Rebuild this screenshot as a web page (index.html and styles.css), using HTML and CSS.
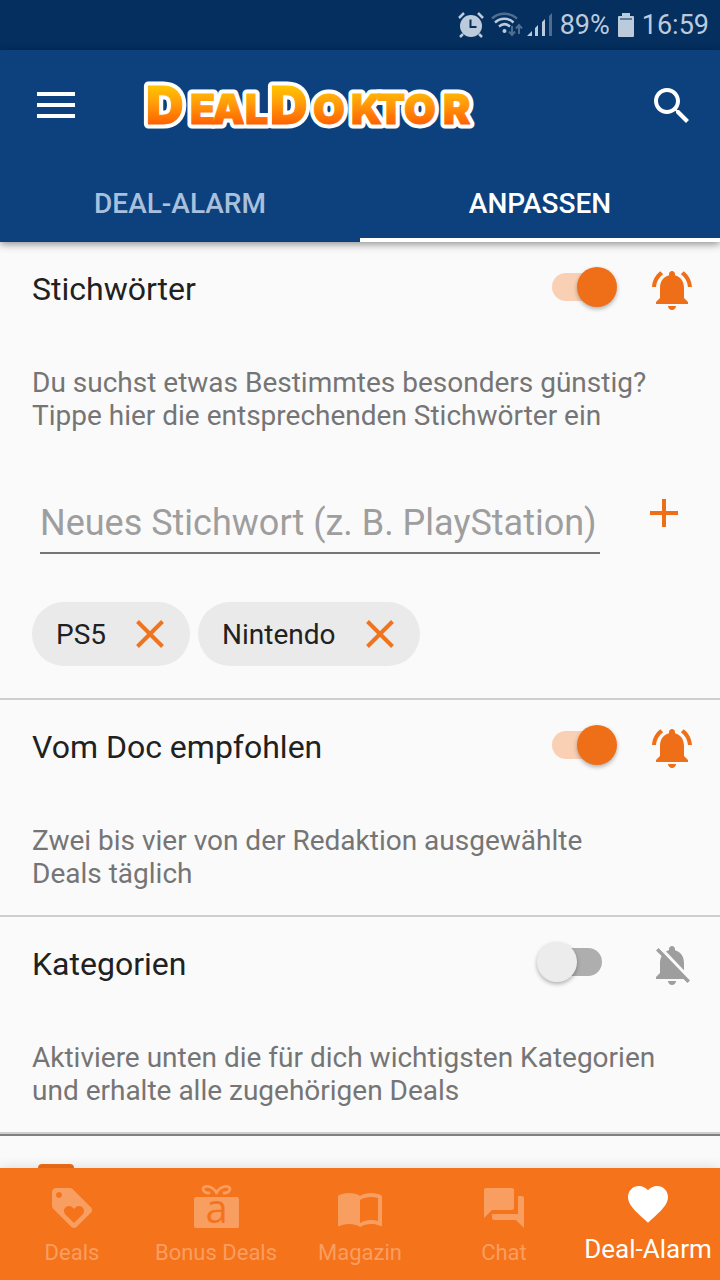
FILE: index.html
```html
<!DOCTYPE html>
<html lang="de">
<head>
<meta charset="utf-8">
<meta name="viewport" content="width=device-width, initial-scale=1">
<title>DealDoktor</title>
<link rel="stylesheet" href="styles.css">
</head>
<body>
<div class="app">
  <div class="status">
    <svg width="26" height="26" viewBox="0 0 26 26" fill="currentColor" aria-hidden="true">
      <circle cx="13" cy="14" r="11"/>
      <path d="M1 6l5-5M25 6l-5-5M5 22l-3 3M21 22l3 3" stroke="currentColor" stroke-width="2.5" fill="none"/>
      <path class="status-cut" d="M12.500 7.500v7.500h6"/>
    </svg>
    <span class="status-radio">
      <svg width="32" height="26" viewBox="0 0 32 26" fill="none" stroke="currentColor" stroke-width="2.500" aria-hidden="true">
        <path d="M1 6.500C8 .2 19 .2 26 6.500" opacity=".4"/>
        <path d="M4 10.500c5.500-5 13-5 18.500 0M8 14.500c3.500-3 7.500-3 11 0"/>
        <circle cx="13.500" cy="19" r="2" fill="currentColor" stroke="none"/>
        <path d="M21 14v9m-3-3.500l3 3.500 3-3.500M28 22v-9m-3 3.500l3-3.500 3 3.500" opacity=".4" stroke-width="2"/>
      </svg>
      <svg width="26" height="26" viewBox="0 0 26 26" fill="currentColor" aria-hidden="true">
        <path d="M0 24l5-5v5zM8 16l3-3v11H8zM15 10l3-3v17h-3z"/>
        <path d="M22 4l3-3v23h-3z" opacity=".4"/>
      </svg>
    </span>
    <span>89%</span>
    <svg width="18" height="26" viewBox="0 0 18 26" fill="currentColor" aria-hidden="true">
      <path d="M5 1h8v3h3q1 0 1 1v19q0 1-1 1H2q-1 0-1-1V5q0-1 1-1h3z"/>
      <path class="status-hair" d="M3 7h12"/>
    </svg>
    <span>16:59</span>
  </div>

  <header class="header">
    <div class="toolbar">
      <button class="icon-button" type="button" aria-label="Menü">
        <svg class="icon" viewBox="0 0 24 24"><path d="M2.500 5h19v2h-19zM2.500 10.500h19v2h-19zM2.500 16h19v2h-19z"/></svg>
      </button>
      <svg class="logo" width="350" height="80" viewBox="0 0 350 80" role="img" aria-label="DealDoktor">
        <defs>
          <linearGradient id="gold" gradientUnits="userSpaceOnUse" x1="0" y1="20" x2="0" y2="58">
            <stop offset="0" stop-color="#ffc400"/>
            <stop offset=".45" stop-color="#ff9d0a"/>
            <stop offset="1" stop-color="#ff6200"/>
          </linearGradient>
        </defs>
        <text class="logo-outline" x="10 54 76 109 134 177 215 241 268 307" y="58"><tspan class="logo-cap">D</tspan>EAL<tspan class="logo-cap">D</tspan>OKTOR</text>
        <text class="logo-fill" x="10 54 76 109 134 177 215 241 268 307" y="58"><tspan class="logo-cap">D</tspan>EAL<tspan class="logo-cap">D</tspan>OKTOR</text>
      </svg>
      <button class="icon-button" type="button" aria-label="Suche">
        <svg class="icon" viewBox="0 0 24 24"><path d="M15.500 14h-.79l-.28-.27C15.410 12.590 16 11.110 16 9.500 16 5.910 13.090 3 9.500 3S3 5.910 3 9.500 5.910 16 9.500 16c1.610 0 3.090-.59 4.230-1.570l.27.28v.79l5 4.990L20.490 19l-4.990-5zm-6 0C7.010 14 5 11.990 5 9.500S7.010 5 9.500 5 14 7.010 14 9.500 11.990 14 9.500 14z"/></svg>
      </button>
    </div>
    <div class="tabs" role="tablist">
      <button class="tab" type="button" role="tab" aria-selected="false">DEAL-ALARM</button>
      <button class="tab tab-active" type="button" role="tab" aria-selected="true">ANPASSEN</button>
    </div>
  </header>

  <main class="content">
    <section class="section">
      <div class="section-head">
        <h2 class="section-title" id="t-keywords">Stichwörter</h2>
        <input class="switch" type="checkbox" role="switch" aria-labelledby="t-keywords" checked>
        <button class="icon-button bell" type="button" aria-label="Benachrichtigung">
          <svg class="icon" viewBox="0 0 24 24"><path id="bell-on" d="M7.580 4.080L6.150 2.650C3.750 4.480 2.170 7.300 2.030 10.500h2c.15-2.650 1.510-4.970 3.550-6.420zm12.390 6.420h2c-.15-3.200-1.730-6.020-4.120-7.850l-1.420 1.430c2.020 1.450 3.390 3.770 3.540 6.420zM18 11c0-3.070-1.640-5.640-4.500-6.320V4c0-.83-.67-1.500-1.500-1.500s-1.500.67-1.500 1.500v.68C7.630 5.360 6 7.920 6 11v5l-2 2v1h16v-1l-2-2v-5zm-6 11c.14 0 .27-.01.4-.04.65-.14 1.180-.58 1.440-1.180.1-.24.15-.5.15-.78h-4c.01 1.100.9 2 2.010 2z"/></svg>
        </button>
      </div>
      <p class="section-text">Du suchst etwas Bestimmtes besonders günstig? Tippe hier die entsprechenden Stichwörter ein</p>
      <form class="keyword-form">
        <input class="keyword-input" type="text" placeholder="Neues Stichwort (z. B. PlayStation)" aria-labelledby="t-keywords">
        <button class="icon-button add" type="button" aria-label="Hinzufügen">
          <svg class="icon" viewBox="0 0 24 24"><path d="M19 13h-6v6h-2v-6H5v-2h6V5h2v6h6v2z"/></svg>
        </button>
      </form>
      <div class="chips">
        <span class="chip">PS5
          <button class="chip-close" type="button" aria-label="PS5 entfernen"><svg width="28" height="28" viewBox="0 0 28 28"><path d="M1.500 1.500l25 25M26.500 1.500l-25 25"/></svg></button>
        </span>
        <span class="chip">Nintendo
          <button class="chip-close" type="button" aria-label="Nintendo entfernen"><svg width="28" height="28" viewBox="0 0 28 28"><path d="M1.500 1.500l25 25M26.500 1.500l-25 25"/></svg></button>
        </span>
      </div>
    </section>

    <section class="section">
      <div class="section-head">
        <h2 class="section-title" id="t-doc">Vom Doc empfohlen</h2>
        <input class="switch" type="checkbox" role="switch" aria-labelledby="t-doc" checked>
        <button class="icon-button bell" type="button" aria-label="Benachrichtigung">
          <svg class="icon" viewBox="0 0 24 24"><use href="#bell-on"/></svg>
        </button>
      </div>
      <p class="section-text">Zwei bis vier von der Redaktion ausgewählte<br>Deals täglich</p>
    </section>

    <section class="section">
      <div class="section-head">
        <h2 class="section-title" id="t-cat">Kategorien</h2>
        <input class="switch" type="checkbox" role="switch" aria-labelledby="t-cat">
        <button class="icon-button bell bell-off" type="button" aria-label="Benachrichtigung">
          <svg class="icon" viewBox="0 0 24 24"><path d="M20 18.690L7.840 6.140 5.270 3.490 4 4.760l2.800 2.800v.01c-.52.99-.8 2.160-.8 3.420v5l-2 2v1h13.730l2 2L21 19.720l-1-1.030zM12 22c1.110 0 2-.89 2-2h-4c0 1.110.89 2 2 2zm6-7.320V11c0-3.080-1.640-5.640-4.500-6.320V4c0-.83-.67-1.500-1.500-1.500s-1.500.67-1.500 1.500v.68c-.15.03-.29.08-.42.12-.1.03-.2.07-.3.11h-.01c-.01 0-.01 0-.02.01-.23.09-.46.2-.68.31 0 0-.01 0-.01.01L18 14.680z"/></svg>
        </button>
      </div>
      <p class="section-text">Aktiviere unten die für dich wichtigsten Kategorien und erhalte alle zugehörigen Deals</p>
    </section>

    <div class="category-list">
      <input class="category-check" type="checkbox" aria-labelledby="t-cat" checked>
    </div>
  </main>

  <nav class="bottom-nav">
    <a class="nav-item" href="#deals">
      <svg class="icon" viewBox="0 0 24 24"><path d="M21.410 11.580l-9-9C12.050 2.220 11.550 2 11 2H4c-1.100 0-2 .9-2 2v7c0 .55.22 1.050.59 1.420l9 9c.36.36.86.58 1.410.58.55 0 1.050-.22 1.410-.59l7-7c.37-.36.59-.86.59-1.410 0-.55-.23-1.060-.59-1.420zM5.500 7C4.670 7 4 6.330 4 5.500S4.670 4 5.500 4 7 4.670 7 5.500 6.330 7 5.500 7zm11.770 8.270L13 19.540l-4.270-4.270C8.280 14.810 8 14.190 8 13.500c0-1.380 1.120-2.500 2.500-2.500.69 0 1.320.28 1.770.74l.73.72.73-.73c.45-.45 1.080-.73 1.770-.73 1.380 0 2.500 1.120 2.500 2.500 0 .69-.28 1.320-.73 1.770z"/></svg>
      <span>Deals</span>
    </a>
    <a class="nav-item" href="#bonus">
      <svg class="icon" viewBox="0 0 48 48">
        <rect x="2" y="13" width="45" height="31" rx="2"/>
        <path d="M24.500 9C21 1.500 11 .5 11 5c0 2.500 3 4 6 4M24.500 9C28 1.500 38 .5 38 5c0 2.500-3 4-6 4" fill="none" stroke="currentColor" stroke-width="2.800" stroke-linecap="round"/>
        <text class="gift-letter" x="24.500" y="39" text-anchor="middle">a</text>
      </svg>
      <span>Bonus Deals</span>
    </a>
    <a class="nav-item" href="#magazin">
      <svg class="icon" viewBox="0 0 24 24"><path d="M21 5c-1.110-.35-2.330-.5-3.500-.5-1.950 0-4.050.4-5.500 1.500-1.450-1.100-3.550-1.500-5.500-1.500S2.450 4.900 1 6v14.650c0 .25.25.5.5.5.1 0 .15-.05.25-.05C3.100 20.450 5.050 20 6.500 20c1.950 0 4.050.4 5.500 1.500 1.350-.85 3.800-1.500 5.500-1.500 1.650 0 3.350.3 4.750 1.050.1.050.15.050.25.050.25 0 .5-.25.5-.5V6c-.6-.45-1.250-.75-2-1zm0 13.500c-1.100-.35-2.300-.5-3.500-.5-1.700 0-4.150.65-5.500 1.500V8c1.350-.85 3.800-1.500 5.500-1.500 1.200 0 2.400.15 3.500.5v11.500z"/></svg>
      <span>Magazin</span>
    </a>
    <a class="nav-item" href="#chat">
      <svg class="icon" viewBox="0 0 24 24"><path d="M21 6h-2v9H6v2c0 .55.45 1 1 1h11l4 4V7c0-.55-.45-1-1-1zm-4 6V3c0-.55-.45-1-1-1H3c-.55 0-1 .45-1 1v14l4-4h10c.55 0 1-.45 1-1z"/></svg>
      <span>Chat</span>
    </a>
    <a class="nav-item nav-active" href="#alarm" aria-current="page">
      <svg class="icon" viewBox="0 0 24 24"><path d="M12 21.350l-1.450-1.320C5.400 15.360 2 12.280 2 8.500 2 5.420 4.420 3 7.500 3c1.740 0 3.410.81 4.500 2.090C13.090 3.810 14.760 3 16.500 3 19.580 3 22 5.420 22 8.500c0 3.780-3.400 6.860-8.550 11.540L12 21.350z"/></svg>
      <span>Deal-Alarm</span>
    </a>
  </nav>
</div>
</body>
</html>
```

FILE: styles.css
```css
* { box-sizing: border-box; }

body {
  margin: 0;
  background: #fafafa;
  color: #212121;
  font-family: Roboto, "Noto Sans", sans-serif;
}

button, input { font: inherit; color: inherit; }

button {
  margin: 0;
  padding: 0;
  border: 0;
  background: none;
}

.app {
  display: flex;
  flex-direction: column;
  height: 100vh;
}

.icon {
  display: block;
  width: 48px;
  height: 48px;
  overflow: visible;
  fill: currentColor;
}

.icon-button {
  flex: none;
  width: 48px;
  height: 48px;
}

/* Status bar */
.status {
  flex: none;
  display: flex;
  align-items: center;
  justify-content: flex-end;
  gap: 7px;
  height: 50px;
  padding: 0 11px;
  background: #042f5f;
  color: #bccbdb;
  font-size: 27px;
}

.status-radio {
  display: flex;
  gap: 4px;
}

.status-cut { fill: none; stroke: #042f5f; stroke-width: 2px; }
.status-hair { fill: none; stroke: #042f5f; stroke-width: 1px; }

/* Header */
.header {
  flex: none;
  position: relative;
  z-index: 1;
  background: #0c417e;
  color: #ffffff;
  box-shadow: 0 2px 8px rgba(0, 0, 0, 0.45);
}

.toolbar {
  display: flex;
  align-items: center;
  height: 112px;
  padding: 0 24px 0 32px;
}

.logo { margin: 0 auto 0 56px; }

.logo-outline, .logo-fill {
  font-family: Inter, Lato, sans-serif;
  font-size: 41px;
  font-weight: 900;
  stroke-linejoin: round;
}

.logo-cap { font-size: 52px; }
.logo-outline { fill: #ffffff; stroke: #ffffff; stroke-width: 9px; }
.logo-fill { fill: url(#gold); stroke: url(#gold); stroke-width: 1px; }

.tabs {
  display: grid;
  grid-template-columns: 1fr 1fr;
}

.tab {
  height: 80px;
  padding-top: 6px;
  border-bottom: 4px solid transparent;
  color: #a9c0dc;
  font-size: 28px;
  font-weight: 500;
}

.tab-active { color: #ffffff; border-bottom-color: #ffffff; }

/* Settings */
.content {
  flex: 1;
  min-height: 0;
  overflow-y: auto;
  scrollbar-width: none;
}

.section {
  padding: 24px 24px 25px 32px;
  border-bottom: 2px solid #cecece;
}

.section-head {
  display: flex;
  align-items: center;
  height: 48px;
}

.section-title {
  flex: 1;
  margin: 0;
  padding-bottom: 2px;
  font-size: 32px;
  font-weight: 400;
}

.switch {
  appearance: none;
  position: relative;
  flex: none;
  width: 50px;
  height: 28px;
  margin: 0 46px 6px 0;
  border-radius: 14px;
  background: #aeaeae;
}

.switch::before {
  content: "";
  position: absolute;
  top: -6px;
  left: -15px;
  width: 40px;
  height: 40px;
  border-radius: 50%;
  background: #ececec;
  box-shadow: 0 2px 4px rgba(0, 0, 0, 0.3);
}

.switch:checked { background: #fad0b5; }

.switch:checked::before {
  left: 25px;
  background: #ef6f19;
}

.bell, .add { color: #ef6f19; }
.bell-off { color: #9e9e9e; }

.section-text {
  margin: 52px 24px 0 0;
  color: #757575;
  font-size: 28px;
  line-height: 33px;
}

.keyword-form {
  display: flex;
  align-items: flex-start;
  gap: 40px;
  margin: 57px 8px 0 8px;
}

.keyword-input {
  flex: 1;
  min-width: 0;
  height: 65px;
  padding: 4px 0 0;
  border: 0;
  border-bottom: 2px solid #757575;
  border-radius: 0;
  outline: 0;
  background: none;
  font-size: 36px;
}

.keyword-input::placeholder { color: #9e9e9e; opacity: 1; }

.chips {
  display: flex;
  gap: 8px;
  margin: 48px 0 7px;
}

.chip {
  display: flex;
  align-items: center;
  gap: 30px;
  height: 64px;
  padding: 0 26px 0 24px;
  border-radius: 32px;
  background: #eaeaea;
  font-size: 28px;
}

.chip-close svg {
  display: block;
  fill: none;
  stroke: #ef741f;
  stroke-width: 4px;
}

.category-list {
  padding: 28px 38px;
  border-top: 2px solid #808080;
}

.category-check {
  appearance: none;
  display: block;
  width: 36px;
  height: 36px;
  margin: 0;
  border-radius: 4px;
  background: #ef6f19;
}

/* Bottom navigation */
.bottom-nav {
  flex: none;
  position: relative;
  display: grid;
  grid-template-columns: repeat(5, 1fr);
  height: 112px;
  background: #f5731b;
  box-shadow: 0 0 12px rgba(0, 0, 0, 0.14);
}

.nav-item {
  display: flex;
  flex-direction: column;
  align-items: center;
  gap: 7px;
  padding-top: 16px;
  color: #f99e61;
  font-size: 22px;
  line-height: 28px;
  text-decoration: none;
  white-space: nowrap;
}

.nav-active {
  padding-top: 12px;
  color: #ffffff;
  font-size: 26px;
}

.gift-letter {
  fill: #f5731b;
  font-family: "Open Sans", sans-serif;
  font-size: 40px;
}
```
